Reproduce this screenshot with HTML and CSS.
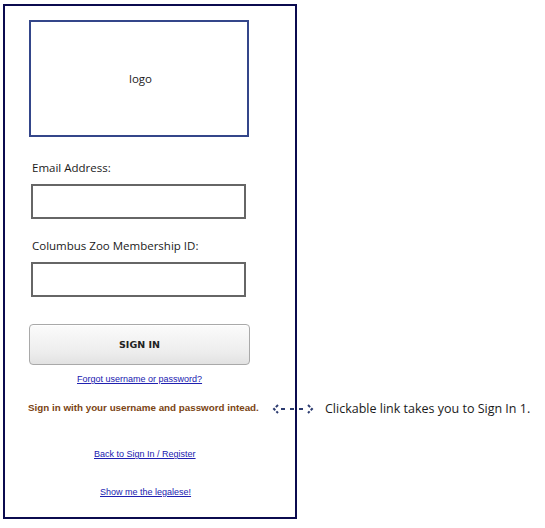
FILE: index.html
```html
<!DOCTYPE html>
<html>
<head>
<meta charset="utf-8">
<link rel="stylesheet" href="styles.css">
</head>
<body>
<div class="page">
  <div class="phone">
    <div class="logo">logo</div>
    <label class="label label-email">Email Address:</label>
    <div class="input"></div>
    <label class="label label-id">Columbus Zoo Membership ID:</label>
    <div class="input"></div>
    <button class="signin">SIGN IN</button>
    <a class="link link-forgot" href="#">Forgot username or password?</a>
    <a class="alt" href="#">Sign in with your username and password intead.</a>
    <a class="link link-back" href="#">Back to Sign In / Register</a>
    <a class="link link-legal" href="#">Show me the legalese!</a>
  </div>
  <div class="note">
    <svg class="arrow" width="44" height="14" viewBox="0 0 44 14">
      <path d="M7 3 L3 7 L7 11" fill="none" stroke="#2c3b70" stroke-width="2" stroke-dasharray="3 1.5"/>
      <path d="M37 3 L41 7 L37 11" fill="none" stroke="#2c3b70" stroke-width="2" stroke-dasharray="3 1.5"/>
      <path d="M10 7 H35" fill="none" stroke="#2c3b70" stroke-width="2" stroke-dasharray="4 5"/>
    </svg>
    <span class="note-text">Clickable link takes you to Sign In 1.</span>
  </div>
</div>
</body>
</html>
```

FILE: styles.css
```css
html, body {
  margin: 0;
  padding: 0;
  background: #ffffff;
}

.page {
  position: relative;
  width: 545px;
  height: 528px;
  padding: 4px 0 0 3px;
  box-sizing: border-box;
}

.phone {
  width: 294px;
  height: 515px;
  box-sizing: border-box;
  border: 2px solid #0b0b4f;
  display: flex;
  flex-direction: column;
  align-items: flex-start;
  font-family: "Open Sans", "Noto Sans", sans-serif;
  color: #1a1a1a;
}

.logo {
  margin: 14px 0 0 24px;
  width: 220px;
  height: 117px;
  box-sizing: border-box;
  border: 2px solid #34468a;
  display: flex;
  align-items: center;
  justify-content: center;
  font-size: 11.5px;
  padding-left: 3px;
}

.label {
  font-size: 11.5px;
  line-height: 16px;
  margin-left: 27px;
}

.label-email {
  margin-top: 23px;
}

.label-id {
  margin-top: 19px;
}

.input {
  margin: 8px 0 0 26px;
  width: 215px;
  height: 35px;
  box-sizing: border-box;
  border: 2px solid #666666;
  background: #fff;
}

.signin {
  margin: 27px 0 0 24px;
  width: 221px;
  height: 41px;
  box-sizing: border-box;
  border: 1px solid #a9a9a9;
  border-radius: 4px;
  background: linear-gradient(#fbfbfb, #ededed 70%, #e2e2e2);
  box-shadow: inset 0 1px 0 #ffffff;
  font-family: "DejaVu Sans", sans-serif;
  font-weight: bold;
  font-size: 9.5px;
  color: #222;
  padding: 0;
}

.link {
  font-family: "Liberation Sans", Arial, sans-serif;
  font-size: 9px;
  line-height: 12px;
  color: #2020b0;
  text-decoration: underline;
}

.link-forgot {
  margin: 8px 0 0 72px;
}

.alt {
  margin: 17px 0 0 23px;
  font-family: "Liberation Sans", Arial, sans-serif;
  font-weight: bold;
  font-size: 9.8px;
  line-height: 12px;
  color: #7b4413;
  text-decoration: none;
}

.link-back {
  margin: 34px 0 0 89px;
}

.link-legal {
  margin: 26px 0 0 95px;
}

.note {
  position: absolute;
  left: 271px;
  top: 400px;
  display: flex;
  align-items: center;
  gap: 10px;
}

.arrow {
  display: block;
}

.note-text {
  font-family: "Open Sans", "Noto Sans", sans-serif;
  font-size: 12.5px;
  color: #1a1a1a;
}
```
